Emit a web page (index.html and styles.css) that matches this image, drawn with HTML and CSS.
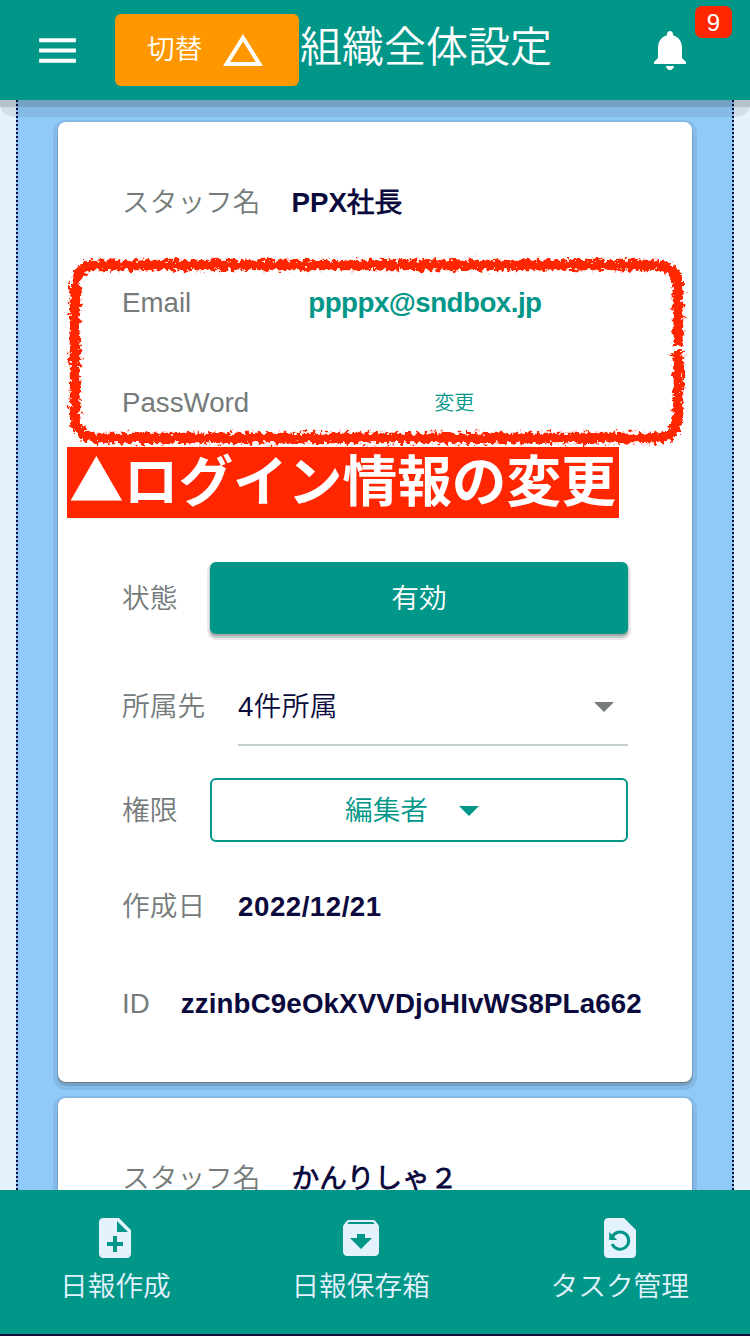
FILE: index.html
```html
<!DOCTYPE html>
<html lang="ja">
<head>
<meta charset="utf-8">
<title>組織全体設定</title>
<link rel="stylesheet" href="styles.css">
</head>
<body>
<header class="header">
  <svg class="menu-icon" viewBox="0 0 24 24"><path d="M3 18h18v-2H3v2zm0-5h18v-2H3v2zm0-7v2h18V6H3z"/></svg>
  <button class="switch">切替<svg class="icon" viewBox="0 0 24 24"><path d="M12 7.77L18.39 18H5.61L12 7.77M12 4L2 20h20L12 4z"/></svg></button>
  <h1 class="title">組織全体設定</h1>
  <div class="bell">
    <svg class="icon" viewBox="0 0 24 24"><path d="M12 22c1.1 0 2-.9 2-2h-4c0 1.1.9 2 2 2zm6-6v-5c0-3.070-1.630-5.640-4.500-6.320V4c0-.830-.670-1.500-1.500-1.500s-1.500.670-1.500 1.500v.680C7.640 5.360 6 7.920 6 11v5l-2 2v1h16v-1l-2-2z"/></svg>
    <span class="badge">9</span>
  </div>
</header>
<main class="main">
  <div class="frame">
    <section class="card">
      <div class="row"><span class="label">スタッフ名</span><span class="value name">PPX社長</span></div>
      <div class="row"><span class="label">Email</span><a class="value email">ppppx@sndbox.jp</a></div>
      <div class="row"><span class="label">PassWord</span><a class="change">変更</a></div>
      <div class="row row-status"><span class="label">状態</span><button class="status">有効</button></div>
      <div class="row row-group"><span class="label">所属先</span>
        <div class="select"><span>4件所属</span><i class="caret"></i></div></div>
      <div class="row row-role"><span class="label">権限</span>
        <button class="role"><span>編集者</span><i class="caret"></i></button></div>
      <div class="row row-date"><span class="label">作成日</span><span class="value date">2022/12/21</span></div>
      <div class="row row-id"><span class="label">ID</span><span class="value id">zzinbC9eOkXVVDjoHIvWS8PLa662</span></div>
      <svg class="crayon" viewBox="0 0 634 200">
        <defs>
          <filter id="rough" x="-5%" y="-10%" width="110%" height="120%">
            <feTurbulence type="fractalNoise" baseFrequency="0.24" numOctaves="3" seed="4" result="n"/>
            <feDisplacementMap in="SourceGraphic" in2="n" scale="11" xChannelSelector="R" yChannelSelector="G"/>
          </filter>
        </defs>
        <path filter="url(#rough)" d="M620 97V40Q620 16 596 16H40Q17 16 17 40V166Q17 189 40 189H596Q620 189 620 166V102"/>
      </svg>
      <p class="callout">▲ログイン情報の変更</p>
    </section>
    <section class="card">
      <div class="row"><span class="label">スタッフ名</span><span class="value name">かんりしゃ２</span></div>
    </section>
  </div>
</main>
<nav class="footer">
  <a class="tab"><svg class="icon" viewBox="0 0 24 24"><path fill-rule="evenodd" d="M14 2H6c-1.100 0-1.990.9-1.990 2L4 20c0 1.100.890 2 1.990 2H18c1.100 0 2-.9 2-2V8l-6-6zm2 14h-3v3h-2v-3H8v-2h3v-3h2v3h3v2zm-3-7V3.500L18.500 9H13z"/></svg>日報作成</a>
  <a class="tab"><svg class="icon" viewBox="0 0 24 24"><path fill-rule="evenodd" d="M20.540 5.230l-1.390-1.680C18.880 3.210 18.470 3 18 3H6c-.470 0-.880.210-1.160.550L3.460 5.230C3.170 5.570 3 6.020 3 6.500V19c0 1.100.9 2 2 2h14c1.100 0 2-.9 2-2V6.500c0-.480-.170-.930-.460-1.270zM12 17.500L6.500 12H10v-2h4v2h3.500L12 17.500zM5.120 5l.810-1h12l.940 1H5.120z"/></svg>日報保存箱</a>
  <a class="tab"><svg class="icon" viewBox="0 0 24 24"><path d="M14 2H6C4.900 2 4 2.900 4 4v16c0 1.100.9 2 2 2h12c1.100 0 2-.9 2-2V8l-6-6z"/><path class="cut" d="M8.100 11.600A4.300 4.300 0 1 1 8.100 15"/><path class="cut-fill" d="M6.600 9v4h4z"/></svg>タスク管理</a>
</nav>
</body>
</html>
```
FILE: styles.css
```css
* { box-sizing: border-box; }
body {
  margin: 0;
  width: 750px;
  height: 1336px;
  display: flex;
  flex-direction: column;
  overflow: hidden;
  background: #e3f2fd;
  color: #0a0a3c;
  font: 350 27.7px/40px "Liberation Sans", "Noto Sans CJK JP DemiLight", "Noto Sans CJK JP", sans-serif;
}
button { font: inherit; border: 0; padding: 0; margin: 0; }
svg { display: block; fill: currentColor; flex: none; }
.icon { width: 48px; height: 48px; }

.header {
  position: relative;
  flex: none;
  display: flex;
  align-items: center;
  height: 100px;
  padding: 0 56px 0 33px;
  background: #009688;
  color: #fff;
}
.header::after {
  content: "";
  position: absolute;
  top: 100%;
  left: 0;
  right: 0;
  height: 17px;
  background: linear-gradient(rgba(0, 0, 0, .2) 7px, rgba(0, 0, 0, .08) 7px);
  border-radius: 0 0 16px 16px / 0 0 12px 12px;
}
.menu-icon { width: 49px; height: 49px; }
.switch {
  display: flex;
  align-items: center;
  width: 184px;
  height: 72px;
  margin-left: 33px;
  padding-left: 32px;
  gap: 17px;
  line-height: 42px;
  border-radius: 6px;
  background: #ff9800;
  color: #fff;
}
.title {
  flex: 1;
  margin: 0 0 4px 1px;
  font-size: 42px;
  font-weight: 350;
  line-height: 60px;
}
.bell { position: relative; }
.badge {
  position: absolute;
  left: 49px;
  top: -20px;
  width: 37px;
  height: 32px;
  border-radius: 7px;
  background: #ff2600;
  font-size: 24px;
  line-height: 34px;
  text-align: center;
}

.main { flex: 1; min-height: 0; padding: 0 16px; overflow: hidden; }
.frame {
  display: flex;
  flex-direction: column;
  gap: 16px;
  padding: 22px 40px 0;
  border: 2px dotted #0a0a3c;
  border-width: 0 2px;
  background: #90caf9;
}
.card {
  position: relative;
  padding: 31px 48px 37px 64px;
  border-radius: 8px;
  background: #fff;
  box-shadow: 0 1px 0 #6f7b78, 0 3px 0 1px rgba(0, 0, 0, .13), 0 3px 0 5px rgba(0, 0, 0, .08);
}
.row { display: flex; align-items: center; height: 100px; white-space: nowrap; }
.label { flex: none; color: #757b7b; }
.value { font-weight: 700; }
.name { margin-left: 31px; }
.email { margin-left: 117px; color: #009688; letter-spacing: -.5px; }
.change { margin-left: 185px; font-size: 20px; color: #009688; }

.row-status { height: 92px; margin-top: 99px; }
.status {
  width: 418px;
  height: 72px;
  margin-left: 32.600px;
  border-radius: 6px;
  background: #009688;
  color: #fff;
  line-height: 74px;
  box-shadow: 0 2px 0 #a9a9a9, 0 3px 0 1px #c2cfcf, 0 3px 0 3px #ede9ea;
}
.row-status .label, .row-group .label, .row-role .label { padding-top: 2px; }
.row-group { height: 124px; }
.select {
  display: flex;
  align-items: center;
  justify-content: space-between;
  width: 390px;
  height: 80px;
  margin-left: 33px;
  padding: 3px 14px 0 0;
  border-bottom: 2px solid #c2cfcf;
  letter-spacing: .3px;
}
.caret {
  border: 10px solid transparent;
  border-top-color: #757b7b;
  border-bottom: 0;
}
.row-role { height: 84px; }
.role {
  display: flex;
  align-items: center;
  justify-content: center;
  gap: 31px;
  width: 418px;
  height: 64px;
  margin-left: 32.600px;
  padding: 2px 14px 0 0;
  border: 2px solid #009688;
  border-radius: 6px;
  background: #fff;
  color: #009688;
}
.role .caret { border-top-color: #009688; }
.row-date { height: 110px; }
.date { margin-left: 33px; letter-spacing: .5px; }
.row-id { height: 83px; }
.id { margin-left: 31px; letter-spacing: .15px; }

.crayon {
  position: absolute;
  left: 0;
  top: 127px;
  width: 634px;
  height: 200px;
}
.crayon path { fill: none; stroke: #ff2600; stroke-width: 10.5; }
.callout {
  position: absolute;
  left: 9px;
  top: 325px;
  width: 552px;
  height: 71px;
  margin: 0;
  padding-left: 2px;
  background: #ff2600;
  color: #fff;
  font: 700 54.7px/62px "Noto Sans CJK JP", sans-serif;
  white-space: nowrap;
}

.footer {
  flex: none;
  display: flex;
  justify-content: space-between;
  height: 146px;
  padding: 24px 61px 0 60px;
  border-bottom: 2px solid #0a0a3c;
  background: #009688;
  color: #e3f2fd;
}
.tab { display: flex; flex-direction: column; align-items: center; gap: 5px; }
.cut { fill: none; stroke: #009688; stroke-width: 1.5; }
.cut-fill { fill: #009688; }
```
